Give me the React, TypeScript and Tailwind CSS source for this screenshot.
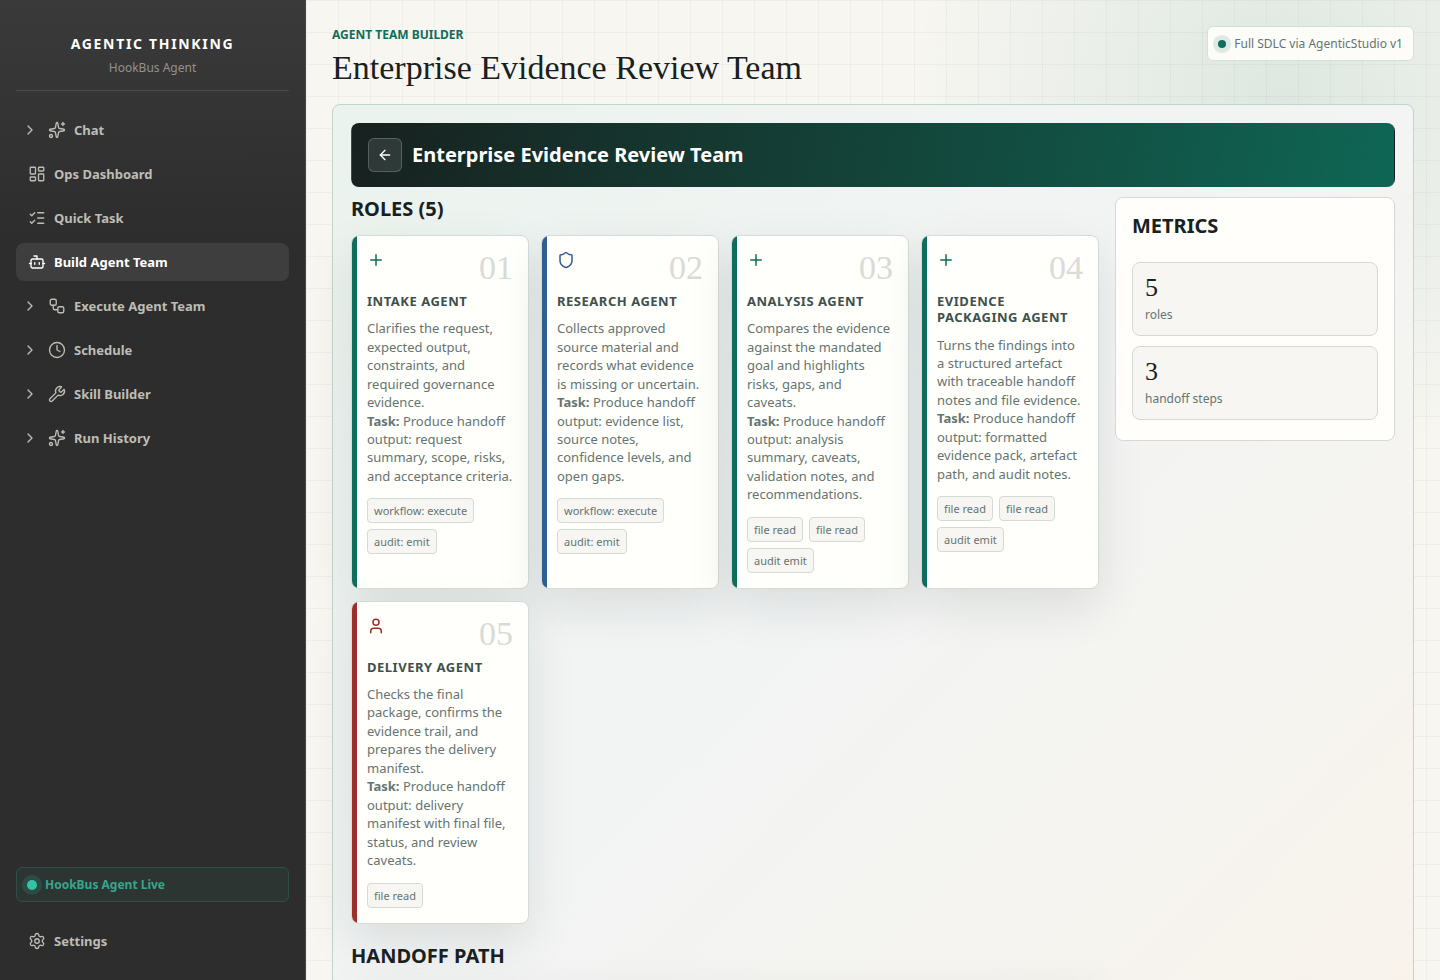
import React from "react";
import {
  ArrowLeft,
  Bot,
  ChevronRight,
  Clock,
  LayoutDashboard,
  ListChecks,
  Plus,
  Settings,
  Shield,
  Sparkles,
  User,
  Workflow,
  Wrench,
  type LucideIcon,
} from "lucide-react";

type NavItem = {
  label: string;
  icon: LucideIcon;
  expandable?: boolean;
  active?: boolean;
};

type Role = {
  number: string;
  title: string;
  icon: LucideIcon;
  bar: string;
  iconColor: string;
  description: string;
  task: string;
  tags: string[];
};

const navItems: NavItem[] = [
  { label: "Chat", icon: Sparkles, expandable: true },
  { label: "Ops Dashboard", icon: LayoutDashboard },
  { label: "Quick Task", icon: ListChecks },
  { label: "Build Agent Team", icon: Bot, active: true },
  { label: "Execute Agent Team", icon: Workflow, expandable: true },
  { label: "Schedule", icon: Clock, expandable: true },
  { label: "Skill Builder", icon: Wrench, expandable: true },
  { label: "Run History", icon: Sparkles, expandable: true },
];

const roles: Role[] = [
  {
    number: "01",
    title: "Intake Agent",
    icon: Plus,
    bar: "bg-[#0f6e5b]",
    iconColor: "text-[#0f6e5b]",
    description: "Clarifies the request, expected output, constraints, and required governance evidence.",
    task: "Produce handoff output: request summary, scope, risks, and acceptance criteria.",
    tags: ["workflow: execute", "audit: emit"],
  },
  {
    number: "02",
    title: "Research Agent",
    icon: Shield,
    bar: "bg-[#2f5f8f]",
    iconColor: "text-[#2f5f8f]",
    description: "Collects approved source material and records what evidence is missing or uncertain.",
    task: "Produce handoff output: evidence list, source notes, confidence levels, and open gaps.",
    tags: ["workflow: execute", "audit: emit"],
  },
  {
    number: "03",
    title: "Analysis Agent",
    icon: Plus,
    bar: "bg-[#0f6e5b]",
    iconColor: "text-[#0f6e5b]",
    description: "Compares the evidence against the mandated goal and highlights risks, gaps, and caveats.",
    task: "Produce handoff output: analysis summary, caveats, validation notes, and recommendations.",
    tags: ["file read", "file read", "audit emit"],
  },
  {
    number: "04",
    title: "Evidence Packaging Agent",
    icon: Plus,
    bar: "bg-[#0f6e5b]",
    iconColor: "text-[#0f6e5b]",
    description: "Turns the findings into a structured artefact with traceable handoff notes and file evidence.",
    task: "Produce handoff output: formatted evidence pack, artefact path, and audit notes.",
    tags: ["file read", "file read", "audit emit"],
  },
  {
    number: "05",
    title: "Delivery Agent",
    icon: User,
    bar: "bg-[#9d2f2b]",
    iconColor: "text-[#9d2f2b]",
    description: "Checks the final package, confirms the evidence trail, and prepares the delivery manifest.",
    task: "Produce handoff output: delivery manifest with final file, status, and review caveats.",
    tags: ["file read"],
  },
];

const metrics = [
  { value: 5, label: "roles" },
  { value: 3, label: "handoff steps" },
];

const NavRow: React.FC<NavItem> = ({ label, icon: Icon, expandable, active }) => {
  return (
    <li className={`flex h-[38px] items-center rounded-lg ${active ? "bg-[#3e3e3e] text-white" : "text-[#bdbdb6]"}`}>
      {expandable && (
        <button type="button" aria-label={`Expand ${label}`} className="flex h-full w-7 items-center justify-center">
          <ChevronRight size={16} />
        </button>
      )}
      <a
        href="#"
        className={`flex h-full grow items-center gap-2 text-[13px] leading-[18px] font-bold ${expandable ? "pl-1" : "pl-3"}`}
      >
        <Icon size={18} strokeWidth={1.8} />
        {label}
      </a>
    </li>
  );
};

const Sidebar: React.FC = () => {
  return (
    <aside className="flex w-[306px] shrink-0 flex-col border-r border-[#474747] bg-[#2d2d2d] bg-[linear-gradient(180deg,#3a3a3a_0px,#2d2d2d_240px)] px-4 pb-5">
      <div className="border-b border-[#4a4a4a] pt-[34px] pb-[13px] text-center">
        <div className="text-sm leading-5 font-bold tracking-[0.12em] text-white">AGENTIC THINKING</div>
        <div className="mt-[5px] text-xs leading-[18px] text-[#92928d]">HookBus Agent</div>
      </div>
      <nav className="mt-5 grow">
        <ul className="flex flex-col gap-1.5">
          {navItems.map((item) => (
            <NavRow key={item.label} {...item} />
          ))}
        </ul>
      </nav>
      <div className="mb-5 flex h-[35px] items-center gap-2 rounded-md border border-[#2d4f47] bg-[#2d3533] pl-2.5 text-xs font-bold text-[#35a68c]">
        <span className="size-2.5 rounded-full bg-[#36c3a3] shadow-[0_0_0_5px_#2d4b45]" />
        HookBus Agent Live
      </div>
      <ul>
        <NavRow label="Settings" icon={Settings} />
      </ul>
    </aside>
  );
};

const RoleCard: React.FC<{ role: Role }> = ({ role }) => {
  const Icon = role.icon;

  return (
    <article className="flex overflow-hidden rounded-lg border border-[#d3dad8] bg-[#fffffb] shadow-[0_18px_48px_rgba(24,33,31,0.10)]">
      <div className={`w-[5px] shrink-0 ${role.bar}`} />
      <div className="min-w-0 grow py-[15px] pr-[15px] pl-2.5">
        <div className="flex items-start justify-between">
          <Icon size={18} className={role.iconColor} />
          <span className="font-['Liberation_Serif',serif] text-[34px] leading-none text-[#dadad7]">{role.number}</span>
        </div>
        <h3 className="mt-2 text-[13px] leading-tight font-bold tracking-[0.04em] text-[#40504d] uppercase">
          {role.title}
        </h3>
        <p className="mt-2.5 text-[13px] leading-[1.42] text-[#667472]">
          {role.description}
          <br />
          <strong>Task:</strong> {role.task}
        </p>
        <ul className="mt-[13px] flex flex-wrap gap-1.5">
          {role.tags.map((tag, i) => (
            <li
              key={i}
              className="rounded-sm border border-[#d3dad8] bg-[#f7f6f2] px-1.5 py-1 text-[11px] leading-[15px] text-[#667472]"
            >
              {tag}
            </li>
          ))}
        </ul>
      </div>
    </article>
  );
};

const MetricsPanel: React.FC = () => {
  return (
    <aside className="self-start rounded-lg border border-[#d3dad8] bg-[#fffefb] px-4 pt-4 pb-5">
      <h2 className="text-xl leading-6 font-bold">METRICS</h2>
      <dl className="mt-6 flex flex-col gap-2.5">
        {metrics.map((metric) => (
          <div key={metric.label} className="flex flex-col-reverse rounded-lg border border-[#d3dad8] bg-[#f7f6f2] px-3 pt-2.5 pb-[11px]">
            <dt className="mt-[3px] text-xs leading-[18px] text-[#667472]">{metric.label}</dt>
            <dd className="font-['Liberation_Serif',serif] text-[26px] leading-[30px]">{metric.value}</dd>
          </div>
        ))}
      </dl>
    </aside>
  );
};

const App: React.FC = () => {
  return (
    <div className="flex h-screen font-['Noto_Sans',sans-serif] text-[#18211f]">
      <Sidebar />
      <main className="min-w-0 grow overflow-y-auto bg-[#f7f6f1] bg-[linear-gradient(rgba(24,33,31,0.04)_1px,transparent_1px),linear-gradient(90deg,rgba(24,33,31,0.04)_1px,transparent_1px),radial-gradient(circle_at_86%_10%,rgba(15,110,91,0.11),transparent_370px)] bg-[size:32px_32px,32px_32px,auto] px-[26px] pt-[26px] [scrollbar-width:none]">
        <header className="flex items-start justify-between">
          <div>
            <p className="text-xs leading-[18px] font-bold text-[#0f6e5b]">AGENT TEAM BUILDER</p>
            <h1 className="mt-1 font-['Liberation_Serif',serif] text-[34px] leading-10">
              Enterprise Evidence Review Team
            </h1>
          </div>
          <div className="flex h-[35px] items-center gap-2 rounded-md border border-[#d0e2db] bg-[#fffefb]/90 px-2.5 text-xs text-[#667472]">
            <span className="size-2 rounded-full bg-[#0f6e5b] shadow-[0_0_0_5px_#dfe9e4]" />
            Full SDLC via AgenticStudio v1
          </div>
        </header>

        <section className="mt-4 min-h-[1000px] rounded-lg border border-[#bfd6cc] bg-[linear-gradient(135deg,#ebf3ee_0%,#f2f4f4_45%,#f5f4f0_72%,#f9f2ea_100%)] p-[18px]">
          <div className="flex h-16 items-center gap-2.5 rounded-lg border border-transparent bg-[linear-gradient(100deg,#18211f,#0f6654)] px-4 text-white">
            <button
              type="button"
              aria-label="Back"
              className="flex size-[34px] items-center justify-center rounded-md border border-white/20 bg-white/10"
            >
              <ArrowLeft size={16} />
            </button>
            <h2 className="text-xl font-bold">Enterprise Evidence Review Team</h2>
          </div>

          <div className="mt-2.5 grid grid-cols-[minmax(0,1fr)_280px] gap-4">
            <div>
              <h2 className="text-xl leading-6 font-bold">ROLES (5)</h2>
              <div className="mt-3.5 grid grid-cols-4 gap-3">
                {roles.map((role) => (
                  <RoleCard key={role.number} role={role} />
                ))}
              </div>
              <h2 className="mt-5 text-xl leading-6 font-bold">HANDOFF PATH</h2>
              <div className="mt-3.5 h-20 rounded-lg border border-[#d3dad8] bg-[#fffffb] shadow-[0_18px_48px_rgba(24,33,31,0.10)]" />
            </div>
            <MetricsPanel />
          </div>
        </section>
      </main>
    </div>
  );
};

export default App;
